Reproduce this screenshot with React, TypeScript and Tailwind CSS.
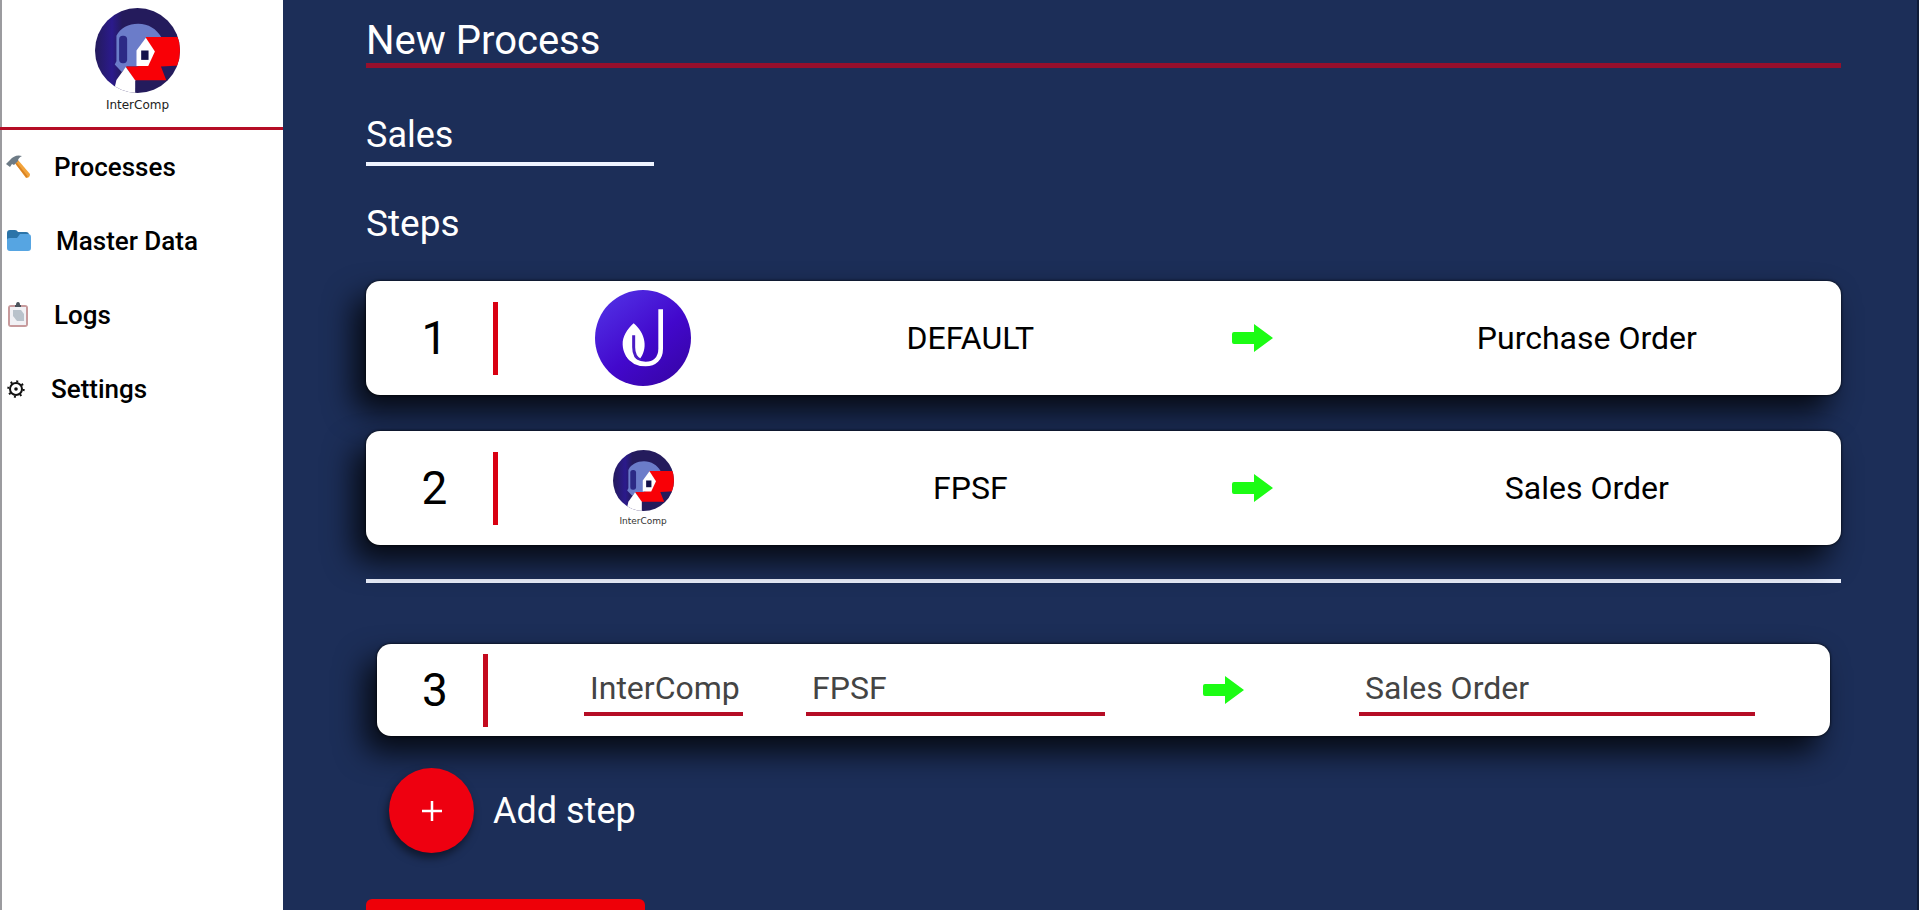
import type { ReactNode } from "react";

function InterCompMark({ className }: { className: string }) {
  return (
    <svg viewBox="286 25 254 254" className={className} aria-hidden="true">
      <defs>
        <linearGradient id="markShade" x1="0" x2="1" y1="0" y2="0">
          <stop offset="0" stopColor="#241b5c" />
          <stop offset="0.2" stopColor="#2b1a8c" />
          <stop offset="0.32" stopColor="#241b5c" />
        </linearGradient>
        <clipPath id="markDisc">
          <circle cx="413" cy="152" r="127" />
        </clipPath>
      </defs>
      <g clipPath="url(#markDisc)">
        <rect x="286" y="25" width="254" height="254" fill="url(#markShade)" />
        <path d="M350 108C362 84 386 72 415 72C446 72 470 88 484 112L440 122L414 156V200H382L366 216L345 194L350 184Z" fill="#6b7cc9" />
        <rect x="358" y="108" width="24" height="82" rx="11" fill="#2c2a86" />
        <path d="M438 112H540V197L483 200L499 241H404L378 200H412L440 190Z" fill="#f90006" />
        <path d="M438 114L465 155L445 198H410V152Z" fill="#fff" />
        <rect x="424" y="152" width="22" height="28" fill="#14124a" />
        <path d="M378 201L406 241V285H345V262L350 240Z" fill="#fff" />
      </g>
    </svg>
  );
}

function JMark() {
  return (
    <svg viewBox="44 30 288 288" className="size-24" aria-hidden="true">
      <defs>
        <linearGradient id="jShade" x1="0.1" y1="0" x2="0.9" y2="1">
          <stop offset="0" stopColor="#5233e6" />
          <stop offset="0.55" stopColor="#4208cc" />
          <stop offset="1" stopColor="#3604a4" />
        </linearGradient>
      </defs>
      <circle cx="188" cy="174" r="144" fill="url(#jShade)" />
      <path d="M160 130C140 148 126 170 127 194C128 216 138 234 152 244L178 238C190 222 195 204 192 184C189 162 176 144 160 130Z" fill="#fff" />
      <path d="M160 166V202C160 222 168 236 182 242" fill="none" stroke="#4a1bc4" strokeWidth="9" />
      <path d="M241 88V206C241 236 222 252 196 252C172 252 152 240 142 222" fill="none" stroke="#fff" strokeWidth="14" />
    </svg>
  );
}

function Arrow() {
  return (
    <svg viewBox="0 0 42 30" className="h-[30px] w-[42px]" aria-hidden="true">
      <path d="M2 9H22V1L41 15L22 29V21H2Q0 21 0 19V11Q0 9 2 9Z" fill="#1cfc14" />
    </svg>
  );
}

function HammerIcon() {
  return (
    <svg viewBox="0 0 25 26" className="h-[26px] w-[25px]" aria-hidden="true">
      <path d="M9 9L12 6L24 20Q24 24 20 24Z" fill="#f2a33a" />
      <path d="M10 9L21 23" stroke="#d98324" strokeWidth="2" />
      <path d="M0 10L4 6Q9 0 16 2Q12 4 12 7L8 11L6 10L4 13Z" fill="#6d7b86" />
    </svg>
  );
}

function FolderIcon() {
  return (
    <svg viewBox="0 0 27 26" className="h-[26px] w-[27px]" aria-hidden="true">
      <path d="M1 5Q1 2 4 2H9Q11 2 12 4H20Q23 4 23 7V18H1Z" fill="#2b74a8" />
      <path d="M1 12Q1 10 4 10H11L14 6H22Q25 6 25 9V20Q25 23 22 23H4Q1 23 1 20Z" fill="#56a5e2" />
    </svg>
  );
}

function ClipboardIcon() {
  return (
    <svg viewBox="0 0 25 28" className="h-7 w-[25px]" aria-hidden="true">
      <rect x="2" y="4" width="20" height="22" rx="3" fill="#c79a9c" />
      <rect x="4" y="6" width="16" height="18" fill="#f1f1f5" />
      <path d="M7 9H15L18 13V20H11L7 15Z" fill="#b9c2cb" />
      <path d="M9 6V4H10Q10 1 12 1T14 4H15V6Z" fill="#4a525b" />
    </svg>
  );
}

function GearIcon() {
  return (
    <svg viewBox="0 0 22 22" className="size-[22px]" aria-hidden="true" fill="none" stroke="#111">
      <circle cx="10" cy="11" r="6" strokeWidth="2" />
      <circle cx="10" cy="11" r="7.7" strokeWidth="2" strokeDasharray="2 4.05" />
      <circle cx="10" cy="11" r="1.8" fill="#111" stroke="none" />
    </svg>
  );
}

const navItems: { label: string; icon: ReactNode }[] = [
  { label: "Processes", icon: <HammerIcon /> },
  { label: "Master Data", icon: <FolderIcon /> },
  { label: "Logs", icon: <ClipboardIcon /> },
  { label: "Settings", icon: <GearIcon /> },
];

const steps: { source: string; target: string; logo: ReactNode }[] = [
  { source: "DEFAULT", target: "Purchase Order", logo: <JMark /> },
  {
    source: "FPSF",
    target: "Sales Order",
    logo: (
      <span className="flex flex-col items-center gap-1">
        <InterCompMark className="size-[61px]" />
        <span className="font-['DejaVu_Sans',sans-serif] text-[9px] leading-3 text-[#333]">InterComp</span>
      </span>
    ),
  },
];

const fieldClass =
  "h-[51px] w-full min-w-0 border-b-4 border-[#b50d25] bg-transparent pl-1.5 text-[32px] text-[#444] outline-none";

export default function App() {
  return (
    <div className="flex h-screen overflow-hidden bg-[#1c2e58] font-['Roboto',sans-serif]">
      <aside className="w-[283px] shrink-0 border-l-2 border-[#9b9b9f] bg-white">
        <div className="-ml-0.5 flex h-[130px] flex-col items-center border-b-[3px] border-[#b50d25] pt-2 pr-2">
          <InterCompMark className="size-[85px]" />
          <span className="mt-1 font-['DejaVu_Sans',sans-serif] text-xs text-[#222]">InterComp</span>
        </div>
        <nav>
          <ul>
            {navItems.map((item) => (
              <li key={item.label}>
                <a href="#" className="flex h-[74px] items-center gap-[23px] pl-1 text-[26px] font-medium text-black">
                  {item.icon}
                  {item.label}
                </a>
              </li>
            ))}
          </ul>
        </nav>
      </aside>

      <main className="min-w-0 flex-1 overflow-hidden border-r-2 border-[#0f1c38] pt-[19px] pr-[76px] pl-[83px] text-white">
        <h1 className="border-b-[5px] border-[#960f2c] text-[40px] leading-[44px]">New Process</h1>

        <input
          aria-label="Process name"
          defaultValue="Sales"
          className="mt-10 block h-[58px] w-[288px] border-b-4 border-[#eef3ff] bg-transparent text-4xl outline-none"
        />

        <h2 className="mt-[34px] text-[37px] leading-[48px]">Steps</h2>

        <ol className="mt-[33px] flex flex-col gap-9 text-black">
          {steps.map((step, index) => (
            <li
              key={step.source}
              className="grid h-[114px] grid-cols-[132px_290fr_364fr_200fr_468fr] items-center justify-items-center rounded-[14px] bg-white pr-5 text-[32px] shadow-[0_0_3px_#000,-12px_16px_30px_rgba(0,0,0,0.8)]"
            >
              <span className="flex h-[73px] w-full items-center justify-center border-r-[5px] border-[#d90012] pl-2.5 text-[46px]">
                {index + 1}
              </span>
              {step.logo}
              <span>{step.source}</span>
              <Arrow />
              <span>{step.target}</span>
            </li>
          ))}
        </ol>

        <hr className="mt-[34px] border-t-4 border-[#eef3ff]" />

        <div className="mx-[11px] mt-[61px] flex h-[92px] items-center rounded-[14px] bg-white pr-[75px] text-black shadow-[0_0_3px_#000,-12px_16px_30px_rgba(0,0,0,0.8)]">
          <span className="flex h-[73px] w-[111px] shrink-0 items-center justify-center border-r-[5px] border-[#c40a1e] pl-2.5 text-[46px]">
            3
          </span>
          <div className="ml-24 w-[159px] shrink-0">
            <input aria-label="System" defaultValue="InterComp" className={fieldClass} />
          </div>
          <div className="ml-[63px] min-w-0 flex-[299]">
            <input aria-label="Source" defaultValue="FPSF" className={fieldClass} />
          </div>
          <div className="min-w-0 flex-[254]">
            <div className="flex justify-center pr-4">
              <Arrow />
            </div>
          </div>
          <div className="min-w-0 flex-[396]">
            <input aria-label="Target" defaultValue="Sales Order" className={fieldClass} />
          </div>
        </div>

        <div className="mt-8 ml-[23px] flex items-center gap-[19px]">
          <button
            id="add-step"
            type="button"
            aria-label="Add step"
            className="flex size-[85px] items-center justify-center rounded-full bg-[#ee0010] shadow-[-2px_5px_8px_rgba(0,0,0,0.5)]"
          >
            <svg viewBox="0 0 20 20" className="size-5" aria-hidden="true">
              <path d="M10 0V20M0 10H20" stroke="#fff" strokeWidth="2.5" />
            </svg>
          </button>
          <label htmlFor="add-step" className="text-4xl">
            Add step
          </label>
        </div>

        <button type="button" aria-label="Save process" className="mt-[46px] block h-16 w-[279px] rounded-md bg-[#ee0008]" />
      </main>
    </div>
  );
}
